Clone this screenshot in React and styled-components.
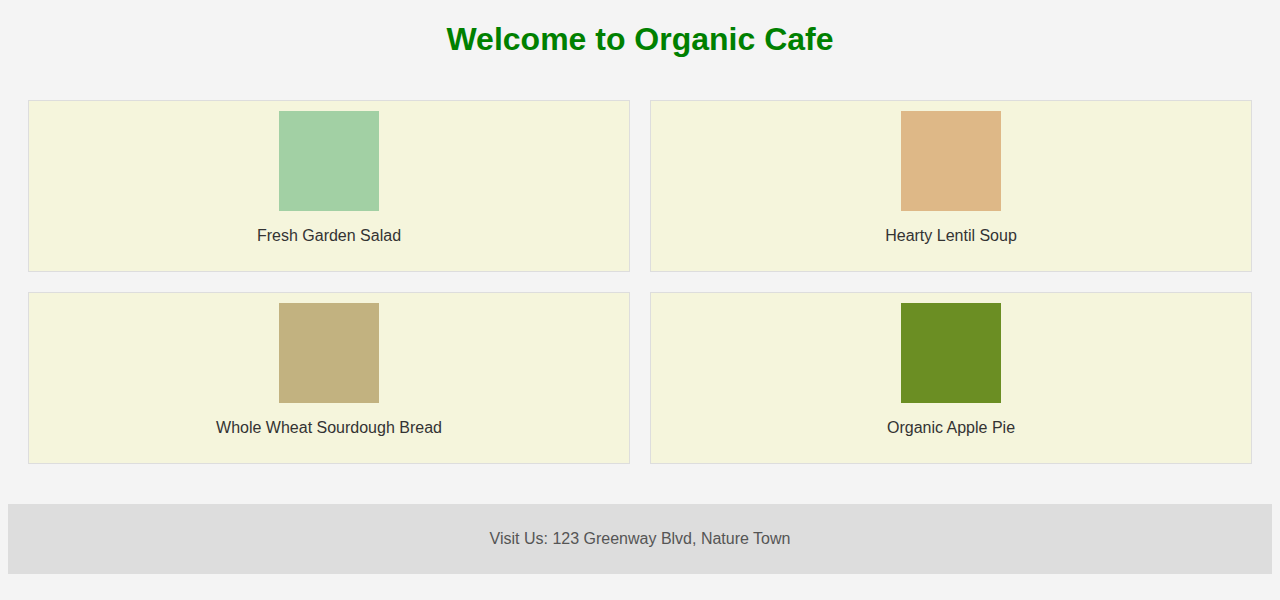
import React from 'react';
import styled, { createGlobalStyle } from 'styled-components';

const GlobalStyle = createGlobalStyle`
    html, body {
        background-color: #f4f4f4;
    }
    body {
        margin: 8px;
        font-family: "Liberation Sans", Arial, sans-serif;
        color: #333;
    }
`

const menu = [
    { name: 'Fresh Garden Salad', color: '#a2d0a4' },
    { name: 'Hearty Lentil Soup', color: '#deb887' },
    { name: 'Whole Wheat Sourdough Bread', color: '#c2b280' },
    { name: 'Organic Apple Pie', color: '#6b8e23' },
];

function App() {
    return (
        <>
            <GlobalStyle />
            <header>
                <Title>Welcome to Organic Cafe</Title>
            </header>

            <Menu>
                {menu.map(item => (
                    <Card key={item.name}>
                        <Swatch color={item.color} />
                        <ItemName>{item.name}</ItemName>
                    </Card>
                ))}
            </Menu>

            <Footer>
                <FooterText>Visit Us: 123 Greenway Blvd, Nature Town</FooterText>
            </Footer>
        </>
    )
}

export default App

const Title = styled.h1`
    margin: 13.44px 0 21.44px;
    font-size: 32px;
    font-weight: bold;
    color: #008000;
    text-align: center;
`

const Menu = styled.main`
    display: grid;
    grid-template-columns: 1fr 1fr;
    gap: 20px;
    padding: 20px;
`

const Card = styled.div`
    background-color: #f5f5dc;
    border: 1px solid #ddd;
    padding: 10px;
    display: flex;
    flex-direction: column;
    align-items: center;
`

const Swatch = styled.div`
    width: 100px;
    height: 100px;
    background-color: ${props => props.color};
`

const ItemName = styled.p`
    margin: 16px 0;
    font-size: 16px;
    line-height: 18px;
    color: #333;
`

const Footer = styled.footer`
    margin-top: 20px;
    padding: 10px;
    background-color: #ddd;
    text-align: center;
`

const FooterText = styled.p`
    margin: 16px 0;
    font-size: 16px;
    line-height: 18px;
    color: #555;
`
